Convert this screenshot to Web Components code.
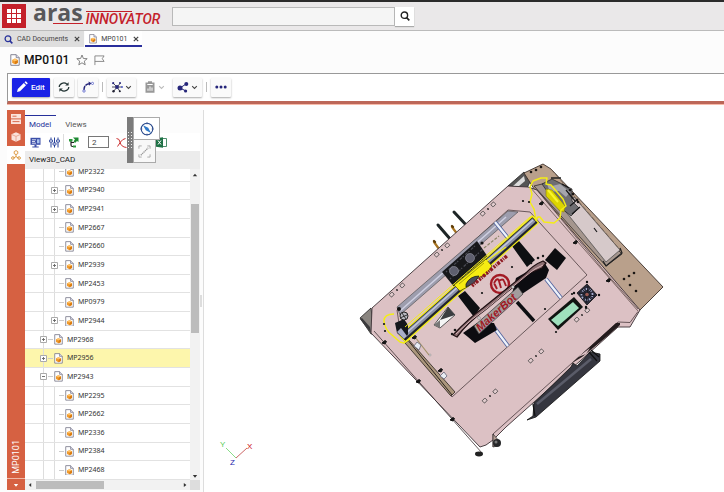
<!DOCTYPE html>
<html lang="en">
<head>
<meta charset="utf-8">
<title>MP0101</title>
<style>
  html, body { margin: 0; height: 100%; }
  body { font-family: Roboto, "Liberation Sans", sans-serif; font-size: 8px; color: #444; background: #fcfcfc; }
</style>
</head>
<body>
<plm-app></plm-app>

<script>
const ICONS = {
  grid: ['0 0 14 14', '<path fill="#fff" d="M0 0h4v4H0zM5 0h4v4H5zM10 0h4v4h-4zM0 5h4v4H0zM5 5h4v4H5zM10 5h4v4h-4zM0 10h4v4H0zM5 10h4v4H5zM10 10h4v4h-4z"/>'],
  search: ['0 0 10 10', '<circle cx="4.4" cy="4.2" r="3.2" fill="none" stroke="currentColor" stroke-width="1.4"/><path d="M6.5 6.5 9.3 9.3" stroke="currentColor" stroke-width="1.7"/>'],
  close: ['0 0 6 6', '<path d="M.8.8l4.4 4.4M5.2.8.8 5.2" stroke="#444" stroke-width="1.2"/>'],
  doc: ['0 0 10 12', '<path d="M.8.7h5.4l3 3v7.6H.8z" fill="#fff" stroke="#778" stroke-width=".9"/><path d="M6.2.7v3h3" fill="#dde" stroke="#778" stroke-width=".8"/><path d="M5 4.6l2.8 1.3v3L5 10.3 2.2 8.9v-3z" fill="#f09a2c"/><path d="M5 7.2l2.8-1.3v3L5 10.3z" fill="#d97b12"/><path d="M5 4.6l2.8 1.3L5 7.2 2.2 5.9z" fill="#ffc266"/>'],
  star: ['0 0 12 12', '<path d="M6 1l1.4 3.5 3.8.2-2.9 2.4.9 3.7L6 8.8l-3.2 2 .9-3.7L.8 4.7l3.8-.2z" fill="none" stroke="#777" stroke-width=".9"/>'],
  flag: ['0 0 12 12', '<path d="M1 11V1h10L9 4l2 3H1" fill="none" stroke="#777" stroke-width=".9"/>'],
  pencil: ['0 0 12 12', '<path d="M1 11l.8-3 6-6 2.2 2.2-6 6zM8.5 1.3l.8-.8q.4-.3.8 0l1.4 1.4q.3.4 0 .8l-.8.8z" fill="#fff"/>'],
  refresh: ['0 0 12 12', '<path d="M1.2 6A4.6 4.2 0 0 1 8.800 3M10.800 6A4.600 4.200 0 0 1 3.200 9" fill="none" stroke="#233" stroke-width="1.200"/><path d="M10.600 1.200v3.400H7.200zM1.400 10.800V7.400h3.400z" fill="#233"/>'],
  arc: ['0 0 12 12', '<path d="M2 9Q2 3 8 2.5" fill="none" stroke="#26267a" stroke-width="1.5" stroke-dasharray="4 .8"/><path d="M6.5.5l3 1.8L7 4.700z" fill="#26267a"/><circle cx="2" cy="10" r="1.200" fill="#fff" stroke="#5560c8" stroke-width=".8"/><circle cx="10.500" cy="2.400" r="1.100" fill="#fff" stroke="#5560c8" stroke-width=".8"/>'],
  hub: ['0 0 12 12', '<path d="M6 6 2 2M6 6l3.500-4M6 6h5M6 6 2.500 10.500M6 6l3 4.500M6 6H1" stroke="#223" stroke-width=".8"/><circle cx="6" cy="6" r="1.900" fill="#26267a"/><circle cx="2.200" cy="2.200" r="1.100" fill="#26267a"/><circle cx="9" cy="2" r="1" fill="#26267a"/><circle cx="11" cy="6" r="1" fill="#5560c8"/><circle cx="2.500" cy="10.300" r="1.200" fill="#223"/><circle cx="8.800" cy="10.300" r="1" fill="#223"/>'],
  clip: ['0 0 12 12', '<path d="M1.500 1.500H4V.3h4v1.200h2.500v10.200h-9z" fill="#999"/><path d="M3.300 3.500h5.400M4 9.800V7.500M6 9.800V5.500M8 9.800V6.500" stroke="#fff" stroke-width="1"/>'],
  share: ['0 0 12 12', '<path d="M3 7l6-4M3 7l6 3" stroke="#26267a" stroke-width="1"/><circle cx="3" cy="7" r="2.500" fill="#26267a"/><circle cx="9.300" cy="3" r="2" fill="#26267a"/><circle cx="8.600" cy="10" r="1.600" fill="#26267a"/>'],
  dots: ['0 0 12 12', '<circle cx="1.800" cy="6" r="1.500" fill="#26267a"/><circle cx="6" cy="6" r="1.500" fill="#26267a"/><circle cx="10.200" cy="6" r="1.500" fill="#26267a"/>'],
  chevron: ['0 0 6 6', '<path d="M1 1.800l2 2 2-2" fill="none" stroke="currentColor" stroke-width=".9"/>'],
  form: ['0 0 10 10', '<rect width="10" height="4.400" fill="#fbe3dc"/><rect y="5.400" width="10" height="4.600" fill="#fbe3dc"/><path d="M1.500 2.200h4M1.500 7.600h7" stroke="#d4603f" stroke-width=".9"/>'],
  cube: ['0 0 10 10', '<path d="M5 .3l4.500 2v5.400L5 9.800.5 7.700V2.300z" fill="#fbe3dc"/><path d="M.7 2.500 5 4.400l4.300-1.900M5 4.400v5.200" fill="none" stroke="#e59b86" stroke-width=".8"/>'],
  assembly: ['0 0 10 10', '<g fill="none" stroke="#d89030" stroke-width=".9"><path d="M5 .6l1.800 1v2L5 4.600 3.200 3.600v-2zM5 4.600v2L2.500 8M5 6.600 7.500 8"/><circle cx="1.900" cy="8" r="1.300"/><circle cx="8.100" cy="8" r="1.300"/></g>'],
  down: ['0 0 6 6', '<path d="M.8 2h4.400L3 4.800z" fill="currentColor"/>'],
  up: ['0 0 6 6', '<path d="M.8 4.300h4.400L3 1.800z" fill="currentColor"/>'],
  left: ['0 0 6 6', '<path d="M4.200 1v4L1.800 3z" fill="currentColor"/>'],
  right: ['0 0 6 6', '<path d="M1.800 1v4l2.600-2z" fill="currentColor"/>'],
  monitor: ['0 0 11 11', '<rect x=".5" y=".8" width="10" height="7" fill="#3c4fa8"/><path d="M2 2.800h4M2 4.500h3M2 6.200h4" stroke="#fff" stroke-width=".8"/><path d="M7 2.300h2.500v4H7z" fill="#a9c3ee"/><path d="M4.500 8h2v1.500h2.200v1H2.300v-1h2.200z" fill="#3c4fa8"/>'],
  sliders: ['0 0 11 11', '<path d="M2 .5v10M5.500.5v10M9 .5v10" stroke="#26409a" stroke-width="1"/><path d="M.5 3h3v2h-3zM4 6h3v2H4zM7.500 3h3v2h-3z" fill="#fff" stroke="#26409a" stroke-width=".8"/>'],
  branch: ['0 0 11 11', '<path d="M3 3v5q0 1.500 1.500 1.500H6M3 5.500h3" fill="none" stroke="#222" stroke-width="1.200"/><path d="M1 2h3.500v2.500H1z" fill="#2c9a3c"/><path d="M5 .5h5.500V5L9 4 7 6 5.500 4.200 7 2.500z" fill="#1f8a34"/><path d="M5 8.500h3v2H5z" fill="#2c9a3c"/>'],
  curve: ['0 0 11 11', '<path d="M.5 1.500Q3.500 1.500 4 5q1 5 6.500 5.500M1.500 9.500l3-4.500q2-3 5-3.500" fill="none" stroke="#c33" stroke-width="1"/>'],
  excel: ['0 0 11 11', '<path d="M5 1.500h5.500v8H5z" fill="#fff" stroke="#1e7145" stroke-width=".8"/><path d="M0 1.200 7 .2v10.600L0 9.800z" fill="#1e7145"/><path d="M2 3.500l3 4M5 3.500l-3 4" stroke="#fff" stroke-width="1"/>'],
  compass: ['0 0 14 14', '<circle cx="7" cy="7" r="5.800" fill="#fff" stroke="#2b4a8c" stroke-width="1.100"/><path d="M3 3.200 8.200 5.800 11 11 5.800 8.200z" fill="#2f78c8"/><path d="M7 .3v2M7 11.700v2M.3 7h2M11.700 7h2" stroke="#2b4a8c" stroke-width=".8"/>'],
  measure: ['0 0 14 14', '<path d="M1 4V1h3M10 1h3v3M13 10v3h-3M4 13H1v-3" fill="none" stroke="#aaa" stroke-width="1"/><path d="M3 11l8-8" stroke="#999" stroke-width="1.300" stroke-dasharray="1.500 .6"/>'],
  plus: ['0 0 7 7', '<path d="M.5.5h6v6h-6z" fill="#fff" stroke="#aaa"/><path d="M2 3.500h3M3.500 2v3" stroke="#666" stroke-width=".9"/>'],
  minus: ['0 0 7 7', '<path d="M.5.5h6v6h-6z" fill="#fff" stroke="#aaa"/><path d="M2 3.500h3" stroke="#666" stroke-width=".9"/>']
};

const RESET = `
  * { box-sizing: border-box; }
  button { font: inherit; color: inherit; border: 0; background: none; padding: 0; margin: 0; display: flex; align-items: center; justify-content: center; }
  input { font: inherit; color: inherit; margin: 0; border-radius: 0; outline: 0; }
`;

function define(name, html, setup) {
  const template = document.createElement('template');
  customElements.define(name, class extends HTMLElement {
    connectedCallback() {
      if (this.shadowRoot) return;
      const root = this.attachShadow({ mode: 'open' });
      template.innerHTML = `<style>${RESET}</style>` + (typeof html === 'function' ? html(this) : html);
      root.append(template.content.cloneNode(true));
      if (setup) setup(this, root);
    }
  });
}

define('ui-icon', el => {
  const [box, body] = ICONS[el.getAttribute('name')];
  const size = el.getAttribute('size') || 12;
  return `<style>:host{display:block;flex:none;width:${size}px}svg{display:block;width:100%}</style>
    <svg viewBox="${box}" aria-hidden="true">${body}</svg>`;
});

define('brand-logo', `
  <style>
    :host { display: flex; align-items: flex-start; align-self: stretch; }
    .apps { width: 24px; height: 24px; margin-top: 2px; background: #c4202a; }
    .word { margin-left: 7px; font: 700 23px/20px "Open Sans", sans-serif; color: #58585a; display: grid; }
    .word::after { content: ""; border-bottom: 1px solid #c4202a; margin: 1px 0 0 20px; }
    .sub { margin: 9px 0 0 3px; border-top: 1px solid #c4202a; border-image: linear-gradient(90deg, #c4202a 62%, transparent 62%) 1; font: italic 500 14px/14px Roboto, sans-serif; color: #c4202a; }
  </style>
  <button class="apps" aria-label="Applications"><ui-icon name="grid" size="14"></ui-icon></button>
  <span class="word">aras</span><span class="sub">INNOVATOR</span>`);

define('app-header', `
  <style>
    :host { display: flex; align-items: center; height: 31px; flex: none; padding: 0 2px; gap: 12px; border-top: 2px solid #2b2b2b; border-bottom: 1px solid #bbb; background: #eae8e9; }
    form { display: flex; flex: 0 1 242px; height: 19px; }
    input { flex: 1; min-width: 0; border: 1px solid #b9b9b9; background: #f5f5f5; padding: 0 4px; }
    button { width: 19px; background: #fff; box-shadow: 0 1px 1px #aaa; color: #222; }
  </style>
  <brand-logo></brand-logo>
  <form><input type="search" aria-label="Search"><button type="button" aria-label="Run search"><ui-icon name="search" size="10"></ui-icon></button></form>`);

define('page-tab', el => `
  <style>
    :host { display: flex; align-items: center; height: 16px; gap: 6px; padding: 0 4px; background: #dedede; font-size: 7px; }
    :host([active]) { background: #fff; border-bottom: 2px solid #2a2f9c; padding: 2px 3px 0 4px; }
    button.t { gap: 4px; }
    ui-icon[name=search] { color: #26309a; }
  </style>
  <button class="t" role="tab"><ui-icon name="${el.getAttribute('icon')}" size="${el.getAttribute('size')}"></ui-icon><slot></slot></button>
  <button aria-label="Close tab"><ui-icon name="close" size="6"></ui-icon></button>`);

define('page-title', `
  <style>
    :host { display: flex; align-items: center; height: 26px; flex: none; padding: 0 10px; gap: 4px; }
    h1 { margin: 0 3px 0 0; font: 500 12px/16px Roboto, sans-serif; color: #111; }
    button + button { margin-left: 2px; }
  </style>
  <ui-icon name="doc" size="10"></ui-icon><h1><slot></slot></h1>
  <button aria-label="Favorite"><ui-icon name="star" size="12"></ui-icon></button>
  <button aria-label="Flag"><ui-icon name="flag" size="11"></ui-icon></button>`);

define('tool-button', el => `
  <style>
    :host { display: block; flex: none; }
    button { height: 19px; min-width: 19px; padding: 0 4px; gap: 2px; background: #fafafa; box-shadow: 0 1px 2px #aaa; border-radius: 1px; }
    :host([primary]) button { background: #1a22e6; color: #fff; font-weight: 500; padding: 0 5px 0 4px; gap: 3px; }
    :host([disabled]) button { background: none; box-shadow: none; color: #bbb; }
  </style>
  <button aria-label="${el.getAttribute('label')}" ${el.hasAttribute('disabled') ? 'disabled' : ''}>
    <ui-icon name="${el.getAttribute('icon')}" size="12"></ui-icon><slot></slot>
    ${el.hasAttribute('menu') ? '<ui-icon name="chevron" size="7"></ui-icon>' : ''}
  </button>`);

define('tool-bar', `
  <style>
    :host { display: flex; align-items: center; height: 31px; flex: none; margin-left: 7px; padding: 0 4px 1px; gap: 4px; background: #fff; border: solid #999; border-width: 1px 0 0 1px; border-bottom: 3px solid #bb6556; box-shadow: 0 1px #f6b9a8; }
    i { width: 1px; height: 10px; background: #bbb; }
  </style>
  <tool-button primary icon="pencil" label="Edit">Edit</tool-button>
  <tool-button icon="refresh" label="Refresh"></tool-button>
  <tool-button icon="arc" label="Promote"></tool-button><i></i>
  <tool-button menu icon="hub" label="Structure"></tool-button>
  <tool-button menu disabled icon="clip" label="Reports"></tool-button>
  <tool-button menu icon="share" label="Share"></tool-button><i></i>
  <tool-button icon="dots" label="More"></tool-button>`);

define('side-strip', `
  <style>
    :host { display: flex; flex-direction: column; width: 18px; flex: none; background: #d66142; color: #fff; }
    button { height: 18px; flex: none; }
    .on { background: #fff; }
    span { writing-mode: vertical-rl; transform: rotate(180deg); margin: auto auto 4px; font-size: 9px; line-height: 12px; }
    .more { height: 12px; border-top: 1px solid #f0b8a8; }
  </style>
  <button aria-label="Form"><ui-icon name="form" size="10"></ui-icon></button>
  <button aria-label="Part"><ui-icon name="cube" size="10"></ui-icon></button>
  <button class="on" aria-label="Model"><ui-icon name="assembly" size="10"></ui-icon></button>
  <span>MP0101</span>
  <button class="more" aria-label="More panels"><ui-icon name="down" size="6"></ui-icon></button>`);

define('tree-row', el => {
  const deep = el.getAttribute('level') === '2', state = el.getAttribute('state');
  return `
  <style>
    :host { display: flex; align-items: center; flex: 1 0 18px; border-bottom: 1px solid #e2e2e2; padding-left: ${deep ? 26 : 15}px; font: 7px/8px "Noto Sans", sans-serif; color: #333;
      background: linear-gradient(#ddd, #ddd) 18px 0 / 1px 100% no-repeat${deep ? ', linear-gradient(#ddd, #ddd) 29px 0 / 1px 100% no-repeat' : ''}; }
    :host([selected]) { background-color: #fdf6ac; }
    .e { width: 7px; height: 7px; flex: none; }
    i { width: 5px; height: 1px; background: #ccc; margin: 0 1px 0 1px; }
    slot { display: block; margin-left: 4px; }
  </style>
  ${state ? `<button class="e" aria-label="${state === 'plus' ? 'Expand' : 'Collapse'}"><ui-icon name="${state}" size="7"></ui-icon></button>` : '<div class="e"></div>'}
  <i></i><ui-icon name="doc" size="9"></ui-icon><slot></slot>`;
});

define('part-tree', `
  <style>
    :host { display: grid; grid-template: minmax(0, 1fr) 10px / minmax(0, 1fr) 10px; flex: 1; min-height: 0; background: #f2f2f2; color: #333; }
    .view { overflow: hidden; background: #fff; }
    .rows { display: flex; flex-direction: column; height: calc(100% + 6px); margin-top: -6px; }
    .v, .h { display: flex; align-items: center; justify-content: space-between; gap: 3px; }
    .v { flex-direction: column; padding: 3px 0 1px; }
    .v b { flex: 0 0 42%; width: 8px; background: #bcbcbc; margin: 23px 0 auto; }
    .h { padding: 0 2px; }
    .h b { flex: 0 0 42%; height: 8px; background: #bcbcbc; margin-right: auto; }
    .c { background: #ddd; }
  </style>
  <div class="view"><div class="rows" role="tree"></div></div>
  <div class="v"><ui-icon name="up" size="6"></ui-icon><b></b><ui-icon name="down" size="6"></ui-icon></div>
  <div class="h"><ui-icon name="left" size="6"></ui-icon><b></b><ui-icon name="right" size="6"></ui-icon></div>
  <div class="c"></div>`, (el, root) => {
  const rows = [['MP2322', 2], ['MP2940', 2, 'plus'], ['MP2941', 2, 'plus'], ['MP2667', 2], ['MP2660', 2], ['MP2939', 2, 'plus'],
    ['MP2453', 2], ['MP0979', 2], ['MP2944', 2, 'plus'], ['MP2968', 1, 'plus'], ['MP2956', 1, 'plus', true], ['MP2943', 1, 'minus'],
    ['MP2295', 2], ['MP2662', 2], ['MP2336', 2], ['MP2384', 2], ['MP2468', 2]];
  for (const [name, level, state, selected] of rows) {
    const row = document.createElement('tree-row');
    row.setAttribute('role', 'treeitem');
    row.setAttribute('level', level);
    if (state) row.setAttribute('state', state);
    row.toggleAttribute('selected', !!selected);
    row.textContent = name;
    root.querySelector('.rows').append(row);
  }
});

define('float-palette', `
  <style>
    :host { display: grid; grid-template: 23px 23px / 6px auto; }
    .grip { grid-row: 1 / 3; background: #7c7c7c radial-gradient(circle, #eee 1px, transparent 1px) 0 0 / 3px 3px; border: solid #7c7c7c; border-width: 14px 0; }
    button { border: 1px solid #aaa; background: #fff; }
    .a { width: 27px; }
    .b { width: 23px; border-top: 0; background: #f8f8f8; }
  </style>
  <div class="grip"></div>
  <button class="a" aria-label="Compass"><ui-icon name="compass" size="14"></ui-icon></button>
  <button class="b" aria-label="Measure"><ui-icon name="measure" size="13"></ui-icon></button>`);

define('model-panel', `
  <style>
    :host { display: flex; flex-direction: column; position: relative; width: 175px; flex: none; min-height: 0; }
    nav { display: flex; gap: 5px; height: 23px; padding-top: 5px; font-size: 8px; }
    nav button { padding: 0 4px; border-top: 1px solid transparent; color: #555; }
    nav .on { border-color: #26309a; color: #26309a; padding-right: 5px; }
    .tools { display: flex; align-items: center; height: 18px; padding: 0 5px; background: #fff; }
    .tools button { width: 19px; height: 12px; justify-content: flex-start; }
    .tools i { width: 1px; height: 16px; background: #ddd; margin: 0 4px 0 -5px; }
    .tools input { width: 21px; height: 12px; border: 1px solid #777; background: #fff; padding: 0 3px; margin: 0 7px 0 1px; }
    .tools .x { margin-left: auto; width: 11px; margin-right: 28px; }
    h2 { margin: 0; padding: 0 4px; font: 400 8px/18px Roboto, sans-serif; color: #222; background: #ececec; }
    float-palette { position: absolute; left: 102px; top: 7px; }
  </style>
  <nav role="tablist"><button class="on" role="tab">Model</button><button role="tab">Views</button></nav>
  <div class="tools">
    <button aria-label="Display"><ui-icon name="monitor" size="11"></ui-icon></button>
    <button aria-label="Settings"><ui-icon name="sliders" size="11"></ui-icon></button><i></i>
    <button aria-label="Expand levels"><ui-icon name="branch" size="11"></ui-icon></button>
    <input type="text" value="2" aria-label="Levels">
    <button aria-label="Clear"><ui-icon name="curve" size="11"></ui-icon></button>
    <button class="x" aria-label="Export to Excel"><ui-icon name="excel" size="11"></ui-icon></button>
  </div>
  <h2>View3D_CAD</h2>
  <part-tree></part-tree>
  <float-palette></float-palette>`);

const slots = [[442,250],[488,209],[397,290],[582,315],[536,356],[490,396]].map(([x, y]) =>
  `<g transform="translate(${x} ${y}) rotate(-41)"><rect x="-9" y="-1.700" width="4" height="3.400" rx=".8" fill="#e2ccce" stroke="#333" stroke-width=".7"/><circle r=".9" fill="#111"/><rect x="5" y="-1.700" width="4" height="3.400" rx=".8" fill="#e2ccce" stroke="#333" stroke-width=".7"/></g>`).join('');
const screws = [[384,342],[418,381],[452,419],[541,203],[575,242],[608,280],[440,370],[414,337]].map(([x, y]) =>
  `<path d="M${x - 2} ${y + 1}l3-2.500 1.500 1-1.500 2.500z" fill="#151515" stroke="#111"/>`).join('');
const holes = [[523,201],[529,202],[512,267],[482,293],[545,309],[556,332],[572,294],[586,308],[384,324],[385,331],[609,281]].map(([x, y]) =>
  `<circle cx="${x}" cy="${y}" r="1.100" fill="#111"/>`).join('');
const pits = [[531,172],[536,170],[541,167],[624,279],[629,276],[634,273],[577,200],[578,202],[573,194],[570,190],[630,285],[636,291]].map(([x, y]) =>
  `<circle cx="${x}" cy="${y}" r="1.300" fill="#1b1714"/>`).join('');

define('model-viewer', `
  <style>
    :host { display: block; flex: 1; min-width: 0; background: #fff; border-left: 1px solid #ddd; }
    svg { display: block; width: 100%; height: 100%; }
    text { font-family: "Liberation Sans", sans-serif; }
  </style>
  <svg viewBox="204 110 520 382" preserveAspectRatio="xMinYMin meet" role="img" aria-label="3D model of MP0101" stroke-linejoin="round">
    <g fill="none" stroke-linecap="round">
      <path d="M438 225l13 15M454 212l14 15" stroke="#1d2526" stroke-width="3"/>
      <path d="M434 242l5 7M452 227l6 8" stroke="#a87422" stroke-width="2.200"/>
      <path d="M434 241l1 1M452 226l1 1" stroke="#5d3c08" stroke-width="2.400"/>
    </g>
    <path d="M360 318l11-10 3 26-3 0z" fill="#8a8580" stroke="#222" stroke-width=".8"/>
    <path d="M362 318l8 9 1 6-11-14z" fill="#3a3a3c"/>
    <path d="M508 186l16-14 7 8-4 8z" fill="#555" stroke="#222" stroke-width=".8"/>
    <path d="M513 186l11-10 1 5-6 5z" fill="#ddd"/>
    <path d="M524 173l19-9 8 5 112 118-23 23-20 15z" fill="#b9a08b" stroke="#3b302a" stroke-width=".9"/>
    <path d="M372 308L508 186l20 1 9 3 103 120-10 17h-12l-20 18-92 82-13 13-7 5-6 2L371 333z" fill="#dcc1c4" stroke="#3a3033" stroke-width=".9"/>
    <path d="M530 187l108 124M537 190l68 82 33 37" fill="none" stroke="#63514c" stroke-width=".8"/>
    <path d="M374 331l108 122" fill="none" stroke="#3c3133" stroke-width=".8"/>
    <path d="M493 447V434L572 363 618 322l12 .5 8-11" fill="none" stroke="#4a3a3d" stroke-width=".8"/>
    <path d="M534 186l16-4 72 72-16 12z" fill="#a5968e" stroke="#2d2a2a" stroke-width=".8"/>
    <path d="M562 207l12-10 46 53-14 12z" fill="#d6c9ca" stroke="#444" stroke-width=".7"/>
    <path d="M551 169l70 82" stroke="#6b594c" stroke-width=".7" stroke-dasharray="5 2"/>
    <path d="M542 184l10-5 20 10 0 12 7 7-8 8-10-8-12-14z" fill="#6f6e72" stroke="#222" stroke-width=".7"/>
    <path d="M547 184l5 2 8-2 10 8-4 5-7-6-9 1z" fill="#a6a6ac"/>
    <path d="M566 190l9 11M570 206l8-7M562 184l7 4M572 214l8-7M594 228l3 4" stroke="#19191b" stroke-width="1.200"/>
    <path d="M551 178l10 0M603 261l3 5 16-13-2-5" fill="none" stroke="#222" stroke-width="1.300"/>
    <path d="M546 189l6 1 13 16-1 6-4-1-14-15z" fill="#dcd400" stroke="#8a8200" stroke-width=".6"/>
    <path d="M548 190l10 12" stroke="#f9f52c" stroke-width="2"/>

    <path d="M397 310L508 210l22 2 57 63L452 397l-51-60z" fill="#ddc4c6" stroke="#4d3d40" stroke-width=".8"/>
    <path d="M397 307L508 211l10 1L400 315z" fill="#9d9dad" stroke="#444" stroke-width=".6"/>
    <path d="M400 311L506 217" stroke="#cfd0e2" stroke-width="1.500"/>
    <path d="M409 340l46 52-4 4-46-53z" fill="#ab967c" stroke="#2b2420" stroke-width=".8"/>
    <path d="M407 339l45 56" stroke="#2b2420" stroke-width="1"/>
    <path d="M415 337l14 18" stroke="#a39269" stroke-width="1.200"/>
    <circle cx="430" cy="355" r="1" fill="#eee" stroke="#777" stroke-width=".5"/>
    <path d="M414 346l3-4 4 3-2 5zM440 376l4-4 3 4-3 3z" fill="#e9edf4" stroke="#667" stroke-width=".8"/>
    <path d="M495 222l13 16M546 279l15 19M493 326l15 20" stroke="#5667a0" stroke-width="4"/>
    <path d="M495 222l13 16M546 279l15 19M493 326l15 20" stroke="#edf2fb" stroke-width="2.200"/>
    <path d="M512 246l7-5 16 19-8 7zM458 296l7-5 15 17-6 9z" fill="#0d0f12"/>
    <path d="M517 302l17 19" stroke="#0d0f12" stroke-width="3.500"/>
    <path d="M434 325l14-18 7 8-15 13z" fill="#f5f5f5" stroke="#333" stroke-width=".8"/>
    <path d="M448 307l7 8-15 5z" fill="#3a3d40"/><path d="M434 325l6-5 0 8z" fill="#777"/>

    <path d="M442 272l35-31 11 16-33 31z" fill="#17181b"/>
    <path d="M446 272l30-27M450 279l33-30M455 284l29-26" stroke="#4b4c55" stroke-width="1.200" stroke-dasharray="1.500 2 3 1"/>
    <g fill="#5e5f6e" stroke="#9a9aa8" stroke-width=".6"><circle cx="454" cy="271" r="4.500"/><circle cx="470" cy="258" r="4.500"/></g>
    <path d="M484 248l15-12" stroke="#8a8466" stroke-width="1.200" stroke-dasharray="3 1.500"/>
    <circle cx="482" cy="243" r="1.600" fill="#111"/>

    <path d="M402 339L536 219" stroke="#f4ed16" stroke-width="10"/>
    <path d="M403 338L535 220" stroke="#22252d" stroke-width="7.500"/>
    <path d="M404 336L534 220" stroke="#8d92a8" stroke-width="4.500"/>
    <path d="M403 336L533 220" stroke="#c3c8de" stroke-width="1.500"/>
    <path d="M454 285l10-8 22-18 6 7-6 9-8 3-9 8-9 5z" fill="#f6ec12" stroke="#58540a" stroke-width=".8"/>
    <path d="M466 284q4-8 13-8l-5 7-8 4z" fill="#4a4d5a" stroke="#111" stroke-width=".7"/>
    <path d="M459 284l25-21" stroke="#a9a20c" stroke-width="1"/>
    <path d="M485 262l7-5 14-10" fill="none" stroke="#f4ed16" stroke-width="1.200"/>
    <path d="M472 286l36-31" stroke="#8e1a22" stroke-width="3.500" stroke-dasharray="2 1 1 1 3 1.500"/>

    <path d="M395 323l9-4 4 6 0 9-3 6-8-7z" fill="#15171c"/>
    <path d="M397 332l7 7 3-3-6-8z" fill="#a9aec8"/>
    <circle cx="404" cy="316" r="4" fill="#b8b8c0" stroke="#222" stroke-width="1"/><circle cx="399" cy="309" r="2" fill="#111"/>
    <path d="M402 313l4 6M400 318l7-3" stroke="#333" stroke-width="1"/>
    <path d="M394 314q-10 0-10 7 1 9 8 14l8 7 4 1 6-4" fill="none" stroke="#f4ed16" stroke-width="1.500"/>
    <path d="M536 219l-4-3-2 1-125 110" fill="none" stroke="#f4ed16" stroke-width="1"/>
    <path d="M536 220l2-3 2 0 4 5 10 1 6-5 1-8 5-4-3-7-12-14-5-1 1-6-6 0-8 3-3 6 2 7-2 8 4 7z" fill="none" stroke="#f4ed16" stroke-width="1.500"/>

    <circle cx="500" cy="284" r="9" fill="none" stroke="#a31a24" stroke-width="2.400"/>
    <path d="M494 283l2-3q2-2 3 1l2 7m-2-7q4-3 5 0l2 5M494 283l3 6" fill="none" stroke="#a31a24" stroke-width="1.900"/>
    <path d="M555 248l11 10-9 12-12-10z" fill="#0c0d10"/>
    <path d="M516 278l28-16 5 8-3 8-24 16-10 0zM463 333l14-10 17 0 3 7-22 13-7-6z" fill="#0c0c10"/>
    <path d="M453 335q16-17 30-27l42-34q8-9 18-13l3 2-4 5-12 5-45 37q-18 13-28 27z" fill="#8c6e71" stroke="#201013" stroke-width="1.300"/>
    <path d="M456 334q16-16 31-26l40-33q8-7 16-10" fill="none" stroke="#d5b2b5" stroke-width="1"/>
    <path d="M474 326l44-39 5 7-44 40z" fill="#a39c9d" stroke="#333" stroke-width=".7"/>
    <text transform="translate(480 332) rotate(-42)" font-size="11" font-weight="700" font-style="italic" fill="#a01722">MakerBot</text>
    <g fill="#fff" stroke="#555" stroke-width=".5"><circle cx="479" cy="318" r="1.300"/><circle cx="513" cy="287" r="1.300"/></g>
    <g fill="#171717"><circle cx="455" cy="330" r="1.300"/><circle cx="452" cy="334" r="1.200"/><circle cx="538" cy="258" r="1.300"/><circle cx="543" cy="256" r="1.200"/><circle cx="531" cy="263" r="1.300"/></g>

    <path d="M548 319l26-22 9 10-25 23z" fill="#101411"/>
    <path d="M551 320l22-18 6 6-21 18z" fill="#9fe0bd"/>
    <path d="M577 293l10-9 10 11-10 10z" fill="#2a2b3a" stroke="#111" stroke-width=".8"/>
    <circle cx="587" cy="294.500" r="5.500" fill="none" stroke="#a7aed0" stroke-width="1.800" stroke-dasharray="2.500 1.500"/>
    <path d="M579 293l16 3M588 286l-2 17M582 289l10 11M592 289l-10 11" stroke="#15161f" stroke-width="1"/>
    <circle cx="587" cy="294.500" r="1.800" fill="#9c5a52"/>
    <g fill="#111"><circle cx="587" cy="282" r="1.200"/><circle cx="599" cy="295" r="1.200"/><circle cx="586" cy="307" r="1.200"/><circle cx="574" cy="293" r="1.200"/></g>

    <path d="M572 363l44-40 4 0 0 2-16 14-22 18z" fill="#231b1c"/>
    <path d="M578 357l12-9-4 6z" fill="#dcc1c4"/>
    <path d="M527 420l6-4 1-13 37-36 2-4 4 3 13-14 10 2 0 7-8 7-56 49z" fill="#35363f" stroke="#111" stroke-width=".8"/>
    <path d="M537 404l54-45" stroke="#5a5c69" stroke-width="2.500"/>
    <path d="M589 352l8 9M591 350l8 7M533 404l2 12" stroke="#111" stroke-width="1.300"/>
    <path d="M493 434l7 8-3 4-4 1z" fill="#b49c92" stroke="#222" stroke-width=".7"/>
    <circle cx="497" cy="443" r="4" fill="#27282a"/><circle cx="496" cy="442" r="1.500" fill="#777"/>
    <ellipse cx="479" cy="454" rx="4" ry="2.400" fill="#222"/>
    ${slots}${screws}${holes}${pits}

    <path d="M236 458l11-10" stroke="#c66" stroke-width="1"/>
    <path d="M236 458l-10-10" stroke="#8d8" stroke-width="1"/>
    <g font-size="8"><text x="247" y="449" fill="#c11">X</text><text x="220" y="447" fill="#5c5">Y</text><text x="230" y="465" fill="#22a">Z</text></g>
  </svg>`);

define('plm-app', `
  <style>
    :host { display: flex; flex-direction: column; height: 100vh; overflow: hidden; }
    .tabs { display: flex; gap: 1px; flex: none; }
    main { display: flex; flex: 1; min-height: 0; margin-top: 6px; padding-left: 7px; }
    side-strip, model-panel { margin-bottom: 2px; }
    .split { display: flex; align-items: center; width: 3px; flex: none; }
    .split i { width: 2px; height: 12px; background: #ddd; }
  </style>
  <app-header></app-header>
  <div class="tabs" role="tablist"><page-tab icon="search" size="9">CAD Documents</page-tab><page-tab active icon="doc" size="8">MP0101</page-tab></div>
  <page-title>MP0101</page-title>
  <tool-bar></tool-bar>
  <main><side-strip></side-strip><model-panel></model-panel><div class="split"><i></i></div><model-viewer></model-viewer></main>`);
</script>
</body>
</html>
